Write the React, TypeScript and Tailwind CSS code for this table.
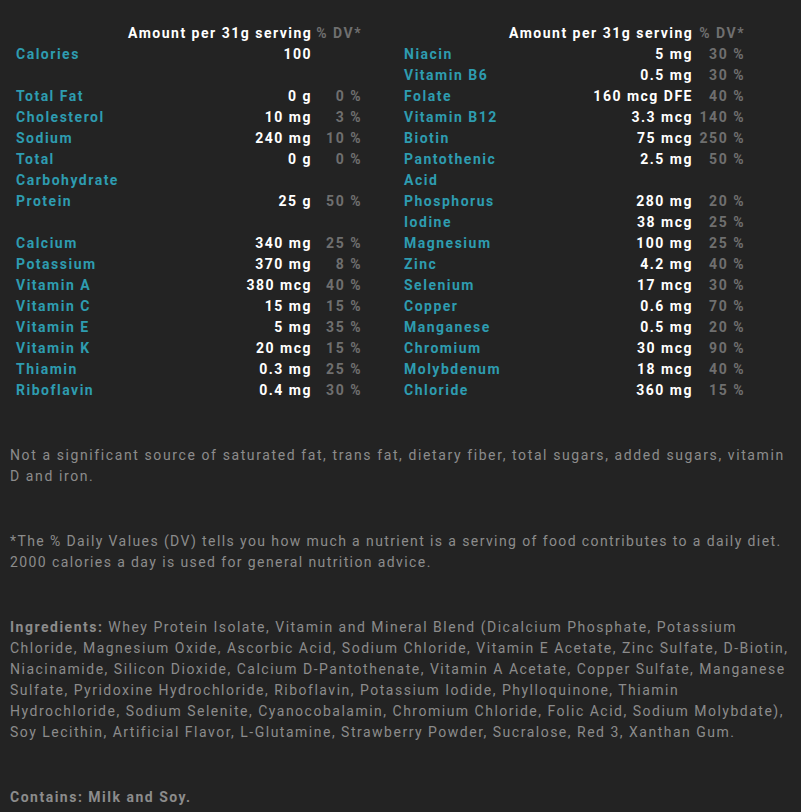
type Row = { name?: string; amount?: string; dv?: string }

const LEFT: Row[] = [
  { name: 'Calories', amount: '100' },
  {},
  { name: 'Total Fat', amount: '0 g', dv: '0 %' },
  { name: 'Cholesterol', amount: '10 mg', dv: '3 %' },
  { name: 'Sodium', amount: '240 mg', dv: '10 %' },
  { name: 'Total Carbohydrate', amount: '0 g', dv: '0 %' },
  { name: 'Protein', amount: '25 g', dv: '50 %' },
  {},
  { name: 'Calcium', amount: '340 mg', dv: '25 %' },
  { name: 'Potassium', amount: '370 mg', dv: '8 %' },
  { name: 'Vitamin A', amount: '380 mcg', dv: '40 %' },
  { name: 'Vitamin C', amount: '15 mg', dv: '15 %' },
  { name: 'Vitamin E', amount: '5 mg', dv: '35 %' },
  { name: 'Vitamin K', amount: '20 mcg', dv: '15 %' },
  { name: 'Thiamin', amount: '0.3 mg', dv: '25 %' },
  { name: 'Riboflavin', amount: '0.4 mg', dv: '30 %' },
]

const RIGHT: Row[] = [
  { name: 'Niacin', amount: '5 mg', dv: '30 %' },
  { name: 'Vitamin B6', amount: '0.5 mg', dv: '30 %' },
  { name: 'Folate', amount: '160 mcg DFE', dv: '40 %' },
  { name: 'Vitamin B12', amount: '3.3 mcg', dv: '140 %' },
  { name: 'Biotin', amount: '75 mcg', dv: '250 %' },
  { name: 'Pantothenic Acid', amount: '2.5 mg', dv: '50 %' },
  { name: 'Phosphorus', amount: '280 mg', dv: '20 %' },
  { name: 'Iodine', amount: '38 mcg', dv: '25 %' },
  { name: 'Magnesium', amount: '100 mg', dv: '25 %' },
  { name: 'Zinc', amount: '4.2 mg', dv: '40 %' },
  { name: 'Selenium', amount: '17 mcg', dv: '30 %' },
  { name: 'Copper', amount: '0.6 mg', dv: '70 %' },
  { name: 'Manganese', amount: '0.5 mg', dv: '20 %' },
  { name: 'Chromium', amount: '30 mcg', dv: '90 %' },
  { name: 'Molybdenum', amount: '18 mcg', dv: '40 %' },
  { name: 'Chloride', amount: '360 mg', dv: '15 %' },
]

function NutrientTable({ rows, cols }: { rows: Row[]; cols: string }) {
  return (
    <div className={`grid ${cols} font-bold`}>
      <div />
      <div className="text-right whitespace-nowrap text-white">Amount per 31g serving</div>
      <div className="text-right text-[#6f6f6f]">% DV*</div>
      {rows.map((r, i) =>
        r.name ? (
          <div key={i} className="contents">
            <div className="text-[#2e9cb0]">{r.name}</div>
            <div className="text-right text-white">{r.amount}</div>
            <div className="text-right text-[#6f6f6f]">{r.dv ?? ''}</div>
          </div>
        ) : (
          <div key={i} className="col-span-3 h-[21px]" />
        )
      )}
    </div>
  )
}

export default function App() {
  return (
    <div
      className="min-h-[812px] bg-[#232323] px-[10px] pt-[23px] pb-[20px] text-[14px] leading-[21px] tracking-[1.5px]"
      style={{ fontFamily: 'Roboto, "Liberation Sans", sans-serif' }}
    >
      <div className="flex">
        <div className="ml-[6px] w-[346px]">
          <NutrientTable rows={LEFT} cols="grid-cols-[112px_184px_50px]" />
        </div>
        <div className="ml-[42px] w-[341px]">
          <NutrientTable rows={RIGHT} cols="grid-cols-[105px_184px_52px]" />
        </div>
      </div>

      <div className="space-y-[44px] pt-[44px] text-[#8c8c8c]">
        <p className="tracking-[1.6px]">
          Not a significant source of saturated fat, trans fat, dietary fiber, total sugars, added sugars, vitamin D and
          iron.
        </p>
        <p className="tracking-[1.4px]">
          *The % Daily Values (DV) tells you how much a nutrient is a serving of food contributes to a daily diet. 2000
          calories a day is used for general nutrition advice.
        </p>
        <p>
          <span className="font-bold">Ingredients:</span> Whey Protein Isolate, Vitamin and Mineral Blend (Dicalcium
          Phosphate, Potassium Chloride, Magnesium Oxide, Ascorbic Acid, Sodium Chloride, Vitamin E Acetate, Zinc
          Sulfate, D-Biotin, Niacinamide, Silicon Dioxide, Calcium D-Pantothenate, Vitamin A Acetate, Copper Sulfate,
          Manganese Sulfate, Pyridoxine Hydrochloride, Riboflavin, Potassium Iodide, Phylloquinone, Thiamin
          Hydrochloride, Sodium Selenite, Cyanocobalamin, Chromium Chloride, Folic Acid, Sodium Molybdate), Soy
          Lecithin, Artificial Flavor, L-Glutamine, Strawberry Powder, Sucralose, Red 3, Xanthan Gum.
        </p>
        <p className="font-bold">Contains: Milk and Soy.</p>
      </div>
    </div>
  )
}
